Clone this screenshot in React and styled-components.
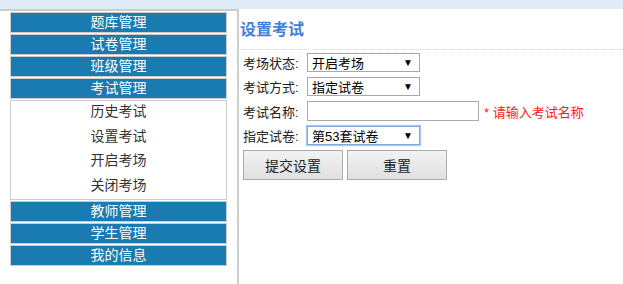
import React from 'react';
import styled, { createGlobalStyle } from 'styled-components';

const GlobalStyle = createGlobalStyle`
  html, body {
    margin: 0;
    padding: 0;
    background: #ffffff;
    font-family: "Liberation Sans", "Noto Sans CJK SC", sans-serif;
  }
`;

const TopBand = styled.div`
  height: 9px;
  background-color: #dfebf6;
`;

const Main = styled.div`
  display: flex;
  height: calc(100vh - 9px);
`;

const Sidebar = styled.div`
  width: 227px;
  padding: 1px 0 0 10px;
  border-top: 2px solid #cccccc;
  border-right: 2px solid #cccccc;
  flex-shrink: 0;
`;

const Menu = styled.div`
  width: 217px;
  display: flex;
  flex-direction: column;
  gap: 1px;
`;

const MenuItem = styled.div`
  height: 19px;
  line-height: 19px;
  border: 1px solid #cccccc;
  background-color: #1a7bb0;
  color: #ffffff;
  font-size: 14px;
  text-align: center;
`;

const SubMenu = styled.div`
  border: 1px solid #cccccc;
  background-color: #ffffff;
`;

const SubItem = styled.div`
  height: 24.5px;
  line-height: 21px;
  text-align: center;
  color: #333333;
  font-size: 14px;
`;

const Content = styled.div`
  flex: 1;
  padding: 0 0 0 1px;
`;

const Heading = styled.h2`
  margin: 0;
  padding: 11px 0 0;
  height: 29px;
  font-size: 16px;
  line-height: 20px;
  font-weight: bold;
  color: #4280d8;
  border-bottom: 1px dotted #d6d6d6;
`;

const Form = styled.div`
  padding: 3px 0 0 3px;
  display: flex;
  flex-direction: column;
  gap: 5px;
`;

const Row = styled.div`
  display: flex;
  align-items: center;
  gap: 3px;
  font-size: 13px;
  color: #222222;
`;

const Label = styled.span`
  width: 61px;
  white-space: nowrap;
`;

const Select = styled.div`
  height: 17px;
  border: 1px solid ${(p) => (p.$focus ? '#7ea8e0' : '#a9a9a9')};
  box-shadow: ${(p) => (p.$focus ? '0 0 1px 1px rgba(120,165,225,0.6)' : 'none')};
  display: flex;
  align-items: center;
  justify-content: space-between;
  padding: 0 6px 0 4px;
  box-sizing: content-box;
  width: 101px;
  font-size: 13px;
  color: #000000;
`;

const Arrow = styled.span`
  font-size: 10px;
  color: #000000;
`;

const TextInput = styled.input`
  width: 168px;
  height: 18px;
  border: 1px solid #a9a9a9;
  padding: 0 1px;
  margin: 0;
  font-size: 13px;
  outline: none;
`;

const Hint = styled.span`
  margin-left: 2px;
  color: #ff1a1a;
  font-size: 13px;
`;

const Buttons = styled.div`
  display: flex;
  gap: 4px;
  margin-top: 0;
`;

const Button = styled.button`
  width: 100px;
  height: 30px;
  border: 1px solid #acacac;
  border-radius: 0;
  background: linear-gradient(#f2f2f2, #e0e0e0);
  font-family: "Liberation Sans", "Noto Sans CJK SC", sans-serif;
  font-size: 14px;
  color: #222222;
  padding: 0;
`;

const topMenus = ['题库管理', '试卷管理', '班级管理', '考试管理'];
const subMenus = ['历史考试', '设置考试', '开启考场', '关闭考场'];
const bottomMenus = ['教师管理', '学生管理', '我的信息'];

export default function App() {
  return (
    <>
      <GlobalStyle />
      <TopBand />
      <Main>
        <Sidebar>
          <Menu>
            {topMenus.map((m) => (
              <MenuItem key={m}>{m}</MenuItem>
            ))}
            <SubMenu>
              {subMenus.map((s) => (
                <SubItem key={s}>{s}</SubItem>
              ))}
            </SubMenu>
            {bottomMenus.map((m) => (
              <MenuItem key={m}>{m}</MenuItem>
            ))}
          </Menu>
        </Sidebar>
        <Content>
          <Heading>设置考试</Heading>
          <Form>
            <Row>
              <Label>考场状态:</Label>
              <Select>
                <span>开启考场</span>
                <Arrow>▼</Arrow>
              </Select>
            </Row>
            <Row>
              <Label>考试方式:</Label>
              <Select>
                <span>指定试卷</span>
                <Arrow>▼</Arrow>
              </Select>
            </Row>
            <Row>
              <Label>考试名称:</Label>
              <TextInput type="text" />
              <Hint>* 请输入考试名称</Hint>
            </Row>
            <Row>
              <Label>指定试卷:</Label>
              <Select $focus>
                <span>第53套试卷</span>
                <Arrow>▼</Arrow>
              </Select>
            </Row>
            <Buttons>
              <Button>提交设置</Button>
              <Button>重置</Button>
            </Buttons>
          </Form>
        </Content>
      </Main>
    </>
  );
}
